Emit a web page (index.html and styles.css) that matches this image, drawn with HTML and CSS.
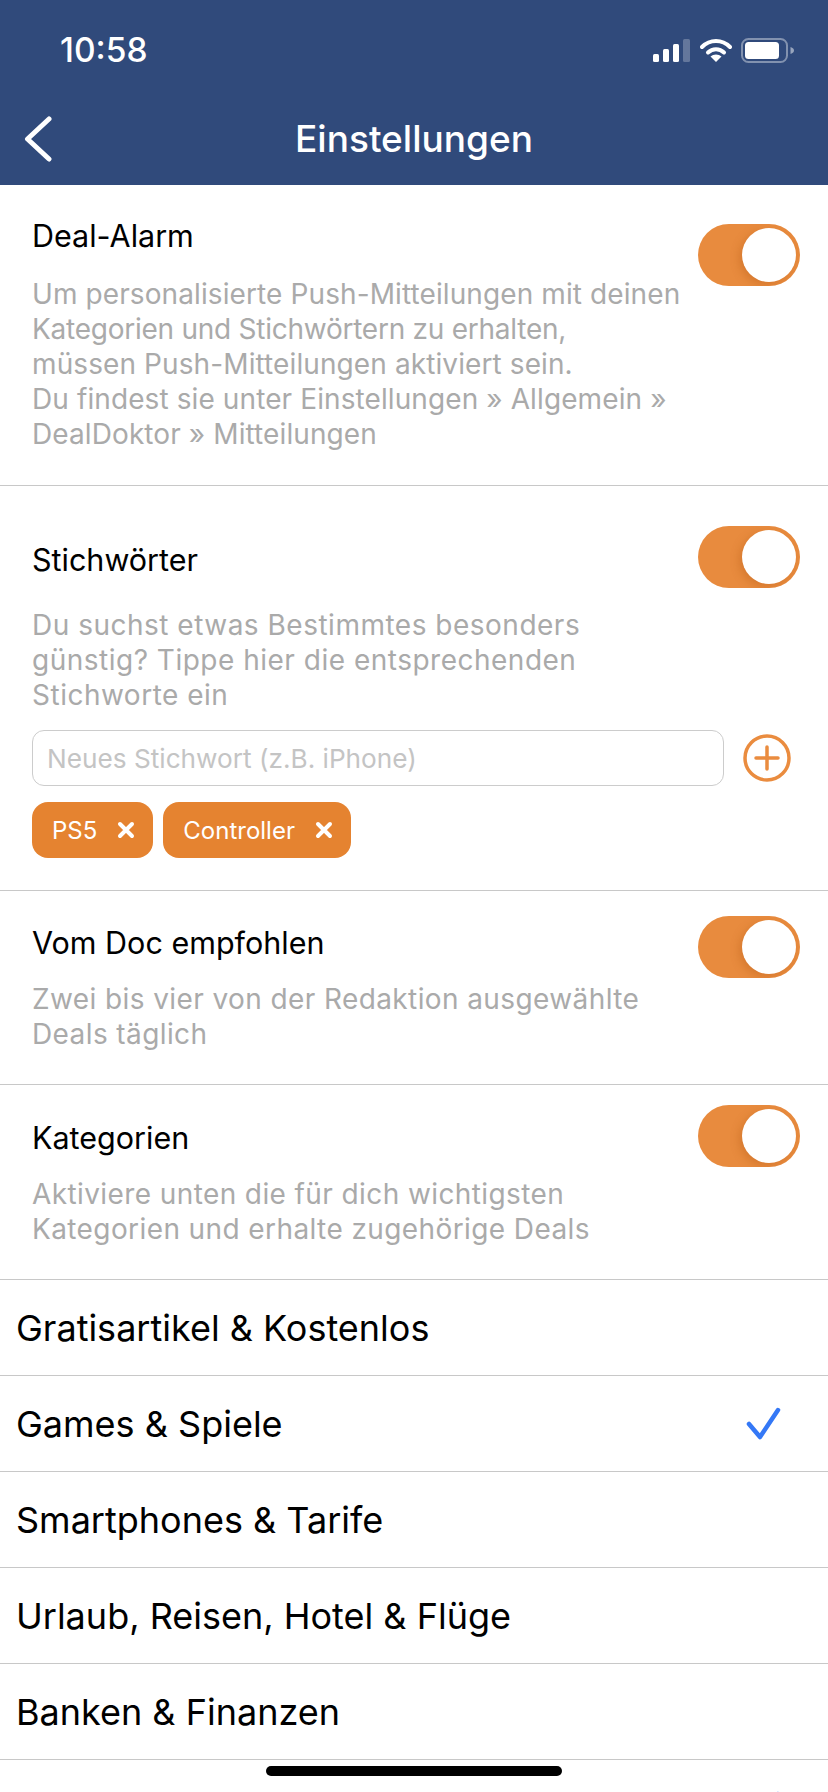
FILE: index.html

```html
<!DOCTYPE html>
<html lang="de">
<head>
  <meta charset="UTF-8">
  <title>Einstellungen</title>
  <link rel="stylesheet" href="styles.css">
</head>
<body>
  <header class="top">
    <div class="status">
      <span class="time">10:58</span>
      <div class="status-icons">
        <svg class="signal" width="37" height="23" viewBox="0 0 37 23">
          <rect x="0" y="15" width="6" height="8" rx="1.5" fill="#fff"/>
          <rect x="10" y="10" width="6" height="13" rx="1.5" fill="#fff"/>
          <rect x="20" y="5" width="6" height="18" rx="1.5" fill="#fff"/>
          <rect x="30" y="0" width="7" height="23" rx="1.5" fill="#fff" opacity="0.25"/>
        </svg>
        <svg class="wifi" width="32" height="24" viewBox="0 0 32 24">
          <path d="M2 9 C10 1 22 1 30 9" fill="none" stroke="#fff" stroke-width="4" stroke-linecap="round"/>
          <path d="M8 14.5 C12.5 10 19.5 10 24 14.5" fill="none" stroke="#fff" stroke-width="4" stroke-linecap="round"/>
          <path d="M16 24 L10.5 18.5 C13.5 15.8 18.5 15.8 21.5 18.5 Z" fill="#fff"/>
        </svg>
        <svg class="battery" width="53" height="25" viewBox="0 0 53 25">
          <rect x="1" y="1" width="45" height="23" rx="6.5" fill="none" stroke="#fff" stroke-opacity="0.4" stroke-width="2"/>
          <rect x="4" y="4" width="34" height="17" rx="3.5" fill="#fff"/>
          <path d="M49.5 9 C52 9.8 53 11 53 12.5 C53 14 52 15.2 49.5 16 Z" fill="#fff" opacity="0.5"/>
        </svg>
      </div>
    </div>
    <nav class="navbar">
      <svg class="back" width="30" height="46" viewBox="0 0 30 46">
        <path d="M25 3 L3.5 23 L25 43" fill="none" stroke="#fff" stroke-width="5" stroke-linecap="round" stroke-linejoin="round"/>
      </svg>
      <h1>Einstellungen</h1>
    </nav>
  </header>

  <section class="block block-alarm">
    <div class="block-head">
      <div class="block-text">
        <h2>Deal-Alarm</h2>
        <p>Um personalisierte Push-Mitteilungen mit deinen<br><span class="tight">Kategorien und Stichwörtern zu erhalten,</span><br>müssen Push-Mitteilungen aktiviert sein.<br>Du findest sie unter Einstellungen » Allgemein »<br>DealDoktor » Mitteilungen</p>
      </div>
      <div class="toggle"><span class="knob"></span></div>
    </div>
  </section>

  <section class="block block-words">
    <div class="block-head">
      <div class="block-text">
        <h2>Stichwörter</h2>
        <p>Du suchst etwas Bestimmtes besonders<br>günstig? Tippe hier die entsprechenden<br>Stichworte ein</p>
      </div>
      <div class="toggle"><span class="knob"></span></div>
    </div>
    <div class="word-input">
      <input type="text" placeholder="Neues Stichwort (z.B. iPhone)">
      <svg class="add" width="48" height="48" viewBox="0 0 48 48">
        <circle cx="24" cy="24" r="22" fill="none" stroke="#ea8c3f" stroke-width="3.5"/>
        <path d="M13 24 H35 M24 13 V35" fill="none" stroke="#ea8c3f" stroke-width="3.5" stroke-linecap="round"/>
      </svg>
    </div>
    <div class="tags">
      <span class="tag">PS5<svg width="18" height="18" viewBox="0 0 18 18"><path d="M3 3 L15 15 M15 3 L3 15" stroke="#fff" stroke-width="4" stroke-linecap="round"/></svg></span>
      <span class="tag">Controller<svg width="18" height="18" viewBox="0 0 18 18"><path d="M3 3 L15 15 M15 3 L3 15" stroke="#fff" stroke-width="4" stroke-linecap="round"/></svg></span>
    </div>
  </section>

  <section class="block block-doc">
    <div class="block-head">
      <div class="block-text">
        <h2>Vom Doc empfohlen</h2>
        <p>Zwei bis vier von der Redaktion ausgewählte<br>Deals täglich</p>
      </div>
      <div class="toggle"><span class="knob"></span></div>
    </div>
  </section>

  <section class="block block-cats">
    <div class="block-head">
      <div class="block-text">
        <h2>Kategorien</h2>
        <p>Aktiviere unten die für dich wichtigsten<br>Kategorien und erhalte zugehörige Deals</p>
      </div>
      <div class="toggle"><span class="knob"></span></div>
    </div>
  </section>

  <ul class="categories">
    <li>Gratisartikel &amp; Kostenlos</li>
    <li>Games &amp; Spiele
      <svg class="check" width="36" height="36" viewBox="0 0 36 36"><path d="M3 18 L14 31 L32 4" fill="none" stroke="#3478f6" stroke-width="4.5" stroke-linecap="round" stroke-linejoin="round"/></svg>
    </li>
    <li>Smartphones &amp; Tarife</li>
    <li>Urlaub, Reisen, Hotel &amp; Flüge</li>
    <li>Banken &amp; Finanzen</li>
    <li>
      <svg class="check" width="36" height="36" viewBox="0 0 36 36"><path d="M3 18 L14 31 L32 4" fill="none" stroke="#3478f6" stroke-width="4.5" stroke-linecap="round" stroke-linejoin="round"/></svg>
    </li>
  </ul>

  <div class="home-bar"></div>
</body>
</html>
```

FILE: styles.css

```css
html, body {
  height: 1792px;
  overflow: hidden;
}

body {
  margin: 0;
  position: relative;
  background: #fff;
  font-family: Inter, "Noto Sans", sans-serif;
  color: #000;
}

.top {
  height: 185px;
  background: #304a7b;
  color: #fff;
}

.status {
  height: 100px;
  display: flex;
  justify-content: space-between;
  align-items: center;
  padding: 0 34px 0 60px;
}

.time {
  font-size: 33.5px;
  font-weight: 500;
}

.status-icons {
  display: flex;
  align-items: center;
  gap: 9px;
}

.signal {
  margin-right: 1px;
}

.navbar {
  height: 85px;
  position: relative;
  display: flex;
  align-items: center;
  justify-content: center;
  padding-bottom: 9px;
  box-sizing: border-box;
}

.navbar h1 {
  margin: 0;
  font-size: 37px;
  font-weight: 500;
}

.back {
  position: absolute;
  left: 24px;
  top: 16px;
}

.block {
  border-bottom: 1px solid #c8c8c8;
  padding: 0 28px 0 32px;
  box-sizing: border-box;
}

.block-alarm { height: 301px; padding-top: 31px; }
.block-words { height: 405px; padding-top: 54px; }
.block-doc { height: 194px; padding-top: 32px; }
.block-cats { height: 195px; padding-top: 33px; }

.block-head {
  display: flex;
  justify-content: space-between;
  align-items: flex-start;
}

.block h2 {
  margin: 0;
  font-size: 30.5px;
  line-height: 40px;
  font-weight: 400;
}

.block p {
  margin: 19px 0 0;
  font-size: 28px;
  line-height: 35px;
  letter-spacing: 0.4px;
  color: #aaa;
}

.block-alarm p {
  margin-top: 21px;
  letter-spacing: 0.1px;
}

.block-words p {
  margin-top: 28px;
  letter-spacing: 0.5px;
}

.block-alarm p .tight {
  letter-spacing: -0.25px;
}

.block-alarm .toggle { margin-top: 8px; }
.block-words .toggle { margin-top: -14px; }
.block-doc .toggle { margin-top: -7px; }
.block-cats .toggle { margin-top: -13px; }

.toggle {
  width: 102px;
  height: 62px;
  flex: none;
  display: flex;
  justify-content: flex-end;
  align-items: center;
  padding-right: 4px;
  box-sizing: border-box;
  border-radius: 31px;
  background: #e88b3e;
  overflow: hidden;
}

.knob {
  width: 54px;
  height: 54px;
  border-radius: 50%;
  background: #fff;
  box-shadow: -3px 3px 8px rgba(180, 90, 20, 0.35);
}

.word-input {
  display: flex;
  align-items: center;
  margin-top: 17px;
}

.word-input input {
  width: 692px;
  height: 56px;
  box-sizing: border-box;
  padding: 0 14px;
  border: 1.5px solid #ccc;
  border-radius: 12px;
  font-family: inherit;
  font-size: 26.2px;
}

.word-input input::placeholder {
  color: #c4c4c4;
}

.add {
  margin-left: 19px;
}

.tags {
  display: flex;
  gap: 10px;
  margin-top: 16px;
}

.tag {
  height: 56px;
  display: flex;
  align-items: center;
  gap: 20px;
  padding: 0 18px 0 20px;
  border-radius: 16px;
  background: #e58330;
  color: #fff;
  font-size: 24px;
}

.categories {
  list-style: none;
  margin: 0;
  padding: 0;
}

.categories li {
  height: 96px;
  box-sizing: border-box;
  border-bottom: 1px solid #c8c8c8;
  padding: 0 46px 0 16px;
  display: flex;
  align-items: center;
  font-size: 36px;
}

.check {
  margin-left: auto;
}

.home-bar {
  position: absolute;
  left: 266px;
  top: 1766px;
  width: 296px;
  height: 10px;
  border-radius: 5px;
  background: #000;
}
```
